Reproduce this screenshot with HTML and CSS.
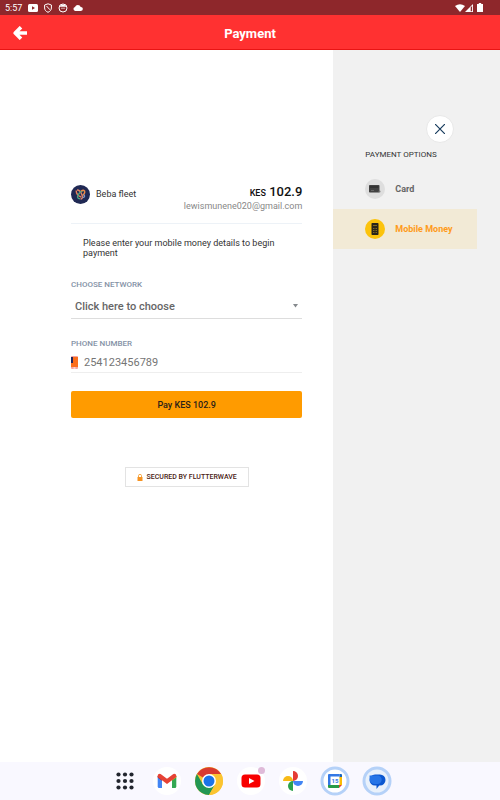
FILE: index.html
```
<!DOCTYPE html>
<html lang="en">
<head>
  <meta charset="UTF-8">
  <meta name="viewport" content="width=device-width, initial-scale=1.0">
  <title>Payment</title>
  <link rel="stylesheet" href="styles.css">
</head>
<body>
  <div class="status-bar">
    <span class="time">5:57</span>
    <svg width="10" height="8" viewBox="0 0 10 8"><rect width="10" height="8" rx="1.5" fill="#fff"/><path d="M4 2.2 7 4 4 5.8z" fill="#8e272b"/></svg>
    <svg width="10" height="10" viewBox="0 0 10 10" fill="none" stroke="#fff"><path d="M5 .8 8.4 2v3C8.4 7 7 8.5 5 9.3 3 8.5 1.6 7 1.6 5V2z"/><path d="M3.5 3 7 6.8"/></svg>
    <svg width="10" height="10" viewBox="0 0 10 10" fill="none" stroke="#fff"><circle cx="5" cy="5" r="4"/><path d="M2 3.2h6M3.2 2.3h3.6M4 4.7v1M6 4.7v1" stroke-width="1.2"/></svg>
    <svg width="10" height="8" viewBox="0 0 10 8"><path d="M2.2 7A2.1 2.1 0 0 1 2 2.9 3 3 0 0 1 7.7 3 2 2 0 0 1 8 7z" fill="#fff"/></svg>
    <div class="signals">
      <svg width="10" height="8" viewBox="0 0 10 8"><path d="M0 2Q5-1.6 10 2L5 8z" fill="#fff"/></svg>
      <svg width="8" height="8" viewBox="0 0 8 8"><path d="M0 8 8 0v8z" fill="#fff"/><path d="M5.7 3.2v4h1.4V2z" fill="#8e272b"/></svg>
      <svg class="battery" width="6" height="9" viewBox="0 0 6 9"><path d="M1.8 0h2.4v1H6v8H0V1h1.8z" fill="#fff"/></svg>
    </div>
  </div>

  <header class="app-bar">
    <button class="back" type="button" aria-label="Back">
      <svg width="14" height="14" viewBox="0 0 14 14" fill="none" stroke="#fff" stroke-width="3.600" stroke-linejoin="round"><path d="M8 1.200 2.200 7 8 12.800M3 7h11"/></svg>
    </button>
    <h1>Payment</h1>
  </header>

  <main class="checkout">
    <section class="details">
      <div class="summary">
        <svg class="logo" width="19" height="19" viewBox="0 0 19 19"><circle cx="9.500" cy="9.500" r="9.500" fill="#202954"/><g fill="none" stroke-width="1.400"><path d="M5.200 5.500c0 3 2 5.500 5 6.500" stroke="#e9805a"/><path d="M6 5c2 0 4 2 5 5s0 4-1.500 4" stroke="#d9826a"/><path d="M9 13.800c-2.500 0-3.200-2-1.500-4.500 1.500-2.300 4-4 5.500-3.500" stroke="#49a383"/><path d="M10.200 6.200c2-1.700 4-1 3.500 1.300-.3 1.500-1.200 2.300-2.200 3" stroke="#f18b45"/><path d="M12.500 9.500c1.600 1 1.400 3-.8 3" stroke="#8298c5"/></g></svg>
        <span class="merchant">Beba fleet</span>
        <div class="total">
          <div class="amount"><small>KES</small> 102.9</div>
          <div class="email">lewismunene020@gmail.com</div>
        </div>
      </div>

      <form class="payment-form">
        <p class="hint">Please enter your mobile money details to begin payment</p>

        <label class="field-label" for="network">CHOOSE NETWORK</label>
        <div class="select-box">
          <select id="network">
            <option>Click here to choose</option>
          </select>
          <svg width="5" height="4" viewBox="0 0 5 4"><path d="M0 0h5L2.500 3.500z" fill="#85898d"/></svg>
        </div>

        <label class="field-label" for="phone">PHONE NUMBER</label>
        <div class="phone-box">
          <svg width="7" height="13" viewBox="0 0 7 13"><rect width="7" height="13" rx="1" fill="#f4a5a0"/><path d="M0 1h7v10H0z" fill="#fb6d1c"/><path d="M0 1h2v6H0z" fill="#22265e"/><path d="M2.500 11.500h2v1h-2z" fill="#fff"/></svg>
          <input id="phone" type="tel" placeholder="254123456789">
        </div>

        <button class="pay" type="button">Pay KES 102.9</button>
      </form>

      <div class="secured">
        <svg width="6" height="7" viewBox="0 0 6 7"><path d="M1.500 3V1.800a1.500 1.500 0 0 1 3 0V3" fill="none" stroke="#f5a947"/><path d="M.5 3h5v4h-5z" fill="#f79321"/></svg>
        SECURED BY FLUTTERWAVE
      </div>
    </section>

    <aside class="options">
      <button class="close" type="button" aria-label="Close">
        <svg width="10" height="10" viewBox="0 0 10 10" stroke="#173c5e" stroke-width="1.200"><path d="M0 0l10 10M10 0 0 10"/></svg>
      </button>
      <h2>PAYMENT OPTIONS</h2>
      <button class="option" type="button">
        <span class="option-icon">
          <svg width="12" height="8" viewBox="0 0 12 8"><rect width="10.500" height="7.500" rx=".8" fill="#414141"/><path d="M1 2h8.500" stroke="#252525"/><path d="M2 5.500h3" stroke="#666"/><circle cx="10.500" cy="6.500" r="1" fill="#777"/></svg>
        </span>
        Card
      </button>
      <button class="option active" type="button">
        <span class="option-icon">
          <svg width="8" height="12" viewBox="0 0 8 12"><rect x=".5" width="7" height="12" rx=".7" fill="#29251b"/><path d="M2 2.500h4M2 5.500h1.500M4.500 5.500H6M2 7.500h1.500M4.500 7.500H6M2 9.500h1.500M4.500 9.500H6" stroke="#9a7b20" stroke-width=".8"/></svg>
        </span>
        Mobile Money
      </button>
    </aside>
  </main>

  <nav class="taskbar">
    <button type="button" aria-label="All apps">
      <svg width="28" height="28" viewBox="0 0 28 28" fill="#22252e"><circle cx="7.500" cy="7.500" r="2.100"/><circle cx="14" cy="7.500" r="2.100"/><circle cx="20.500" cy="7.500" r="2.100"/><circle cx="7.500" cy="14" r="2.100"/><circle cx="14" cy="14" r="2.100"/><circle cx="20.500" cy="14" r="2.100"/><circle cx="7.500" cy="20.500" r="2.100"/><circle cx="14" cy="20.500" r="2.100"/><circle cx="20.500" cy="20.500" r="2.100"/></svg>
    </button>
    <button type="button" aria-label="Gmail">
      <svg width="28" height="28" viewBox="0 0 28 28"><circle cx="14" cy="14" r="14" fill="#fff"/><path d="M4.700 9v10.500q0 1.500 1.500 1.500H9v-9z" fill="#4285f4"/><path d="M23.300 9v10.500q0 1.500-1.500 1.500H19v-9z" fill="#34a853"/><path d="M19 9v4.500l4.300-3.200V9z" fill="#fbbc04"/><path d="M4.700 9v1.500L9 13.700V9z" fill="#b92424"/><path d="M4.700 9c0-2 2-2.800 3.600-1.600L14 11.700l5.700-4.300c1.600-1.200 3.600-.4 3.600 1.600v1L14 17l-9.300-7z" fill="#e64235"/></svg>
    </button>
    <button type="button" aria-label="Chrome">
      <svg width="28" height="28" viewBox="0 0 28 28"><circle cx="14" cy="14" r="14" fill="#fbc431"/><path d="M14 14 2 7A14 14 0 0 1 26.100 7z" fill="#d83a30"/><path d="M1.900 7A14 14 0 0 0 14 28l6-10.500H8z" fill="#229754"/><path d="M14 7h12.100A14 14 0 0 1 14 28l6.100-10.500z" fill="#fbc431"/><circle cx="14" cy="14" r="7" fill="#fff"/><circle cx="14" cy="14" r="5.500" fill="#1a73e8"/></svg>
    </button>
    <button type="button" aria-label="YouTube">
      <svg width="28" height="28" viewBox="0 0 28 28"><circle cx="14" cy="14" r="14" fill="#fff"/><rect x="4.500" y="7.500" width="19" height="13" rx="3.500" fill="#f80000"/><path d="M12 11l5.500 3-5.500 3z" fill="#fff"/></svg>
      <span class="dot"></span>
    </button>
    <button type="button" aria-label="Photos">
      <svg width="28" height="28" viewBox="0 0 28 28"><circle cx="14" cy="14" r="14" fill="#fff"/><path d="M14 4a5 5 0 0 1 0 10z" fill="#e53b35"/><path d="M24 14a5 5 0 0 1-10 0z" fill="#4285f4"/><path d="M14 24a5 5 0 0 1 0-10z" fill="#2ba24c"/><path d="M4 14a5 5 0 0 1 10 0z" fill="#f8ba16"/></svg>
    </button>
    <button type="button" aria-label="Calendar">
      <svg width="28" height="28" viewBox="0 0 28 28"><circle cx="14" cy="14" r="13" fill="#fff" stroke="#b5d1f8" stroke-width="3"/><path d="M7.500 7.500h10.500v10.500H7.500z" fill="#fff"/><path d="M7 20V8q0-1 1-1h10.500v2.500h-9V18z" fill="#3478e5"/><path d="M18.500 7h1.500q1 0 1 1v2.500h-2.500z" fill="#1765c1"/><path d="M18.500 10h2.500V18h-2.500z" fill="#fbbc04"/><path d="M7 18h11v3H8q-1 0-1-1z" fill="#279b48"/><path d="M18 18h3l-3 3z" fill="#e13e33"/><text x="14" y="16" text-anchor="middle" class="date">15</text></svg>
    </button>
    <button type="button" aria-label="Messages">
      <svg width="28" height="28" viewBox="0 0 28 28"><circle cx="14" cy="14" r="13" fill="#e9f1fb" stroke="#b5d1f8" stroke-width="3"/><path d="M12 7.500h5a5.500 5.500 0 0 1 0 11h-.8L13.500 22v-3.500H12a5.500 5.500 0 0 1 0-11z" fill="#0b57d0"/><path d="M6.500 8.500h8a4.200 4.200 0 0 1 0 8.400H11a4.500 4.500 0 0 1-4.300-5z" fill="#2675e7"/></svg>
    </button>
  </nav>
</body>
</html>
```
FILE: styles.css
```
* {
  box-sizing: border-box;
}
body {
  margin: 0;
  min-height: 100vh;
  display: flex;
  flex-direction: column;
  font-family: Roboto, Arial, sans-serif;
  font-size: 9px;
  color: #333;
  background-color: #fff;
}
button, input, select {
  font-family: inherit;
  border: none;
  padding: 0;
  background: none;
}
button {
  cursor: pointer;
}
svg {
  display: block;
  flex-shrink: 0;
}

/* top bars */
.status-bar {
  display: flex;
  align-items: center;
  gap: 5px;
  height: 15px;
  padding: 0 17px 0 5px;
  color: #fff;
  background-color: #8e272b;
}
.time {
  margin-right: 1px;
}
.signals {
  display: flex;
  align-items: center;
  margin-left: auto;
}
.battery {
  margin-left: 4px;
}
.app-bar {
  display: grid;
  grid-template-columns: 1fr auto 1fr;
  align-items: center;
  height: 35px;
  padding: 2px 13px 0;
  color: #fff;
  background-color: #ff3131;
  border-bottom: 1px solid #e81414;
}
.back {
  justify-self: start;
}
.app-bar h1 {
  margin: 0;
  font-size: 13px;
  font-weight: 700;
}

/* checkout */
.checkout {
  flex: 1;
  display: grid;
  grid-template-columns: 2fr 1fr;
}
.details {
  padding: 134px 31px 0 71px;
}
.summary {
  display: flex;
  align-items: flex-start;
  height: 40px;
  border-bottom: 1px solid #edf2f7;
}
.logo {
  margin-top: 1px;
}
.merchant {
  margin: 5px 0 0 6px;
}
.total {
  margin-left: auto;
  text-align: right;
}
.amount {
  font-size: 13px;
  line-height: 16px;
  font-weight: 500;
  color: #111;
}
.amount small {
  font-size: 9px;
}
.email {
  line-height: 10px;
  color: #888;
}
.payment-form {
  display: flex;
  flex-direction: column;
}
.hint {
  margin: 14px 12px 22px;
  line-height: 10px;
}
.field-label {
  font-size: 8px;
  line-height: 10px;
  font-weight: 500;
  color: #8492a6;
}
.select-box {
  display: flex;
  align-items: center;
  height: 29px;
  margin-bottom: 20px;
  padding: 4px 4px 0;
  border-bottom: 1px solid #ddd;
}
.select-box select {
  flex: 1;
  appearance: none;
  font-size: 11px;
  font-weight: 500;
  color: #666;
}
.phone-box {
  display: flex;
  align-items: center;
  gap: 6px;
  height: 24px;
  margin-bottom: 18px;
  padding-top: 4px;
  border-bottom: 1px solid #eee;
}
.phone-box input {
  flex: 1;
  min-width: 0;
  font-size: 11px;
}
.phone-box input::placeholder {
  color: #757575;
}
.pay {
  height: 27px;
  font-size: 9px;
  font-weight: 500;
  color: #2b2118;
  background-color: #ff9b00;
  border-radius: 2px;
}
.secured {
  display: flex;
  align-items: center;
  gap: 4px;
  width: fit-content;
  height: 20px;
  margin: 49px auto 0;
  padding: 0 11px;
  font-size: 7px;
  font-weight: 500;
  color: #4a1b14;
  border: 1px solid #e3e3e3;
}

/* payment options */
.options {
  display: flex;
  flex-direction: column;
  align-items: flex-start;
  padding-top: 65px;
  background-color: #f1f1f1;
}
.close {
  display: grid;
  place-items: center;
  width: 28px;
  height: 28px;
  margin-left: 93px;
  background-color: #fff;
  border: 1px solid #e8e8e8;
  border-radius: 50%;
}
.options h2 {
  margin: 7px 0 9px 32px;
  font-size: 8px;
  line-height: 10px;
  font-weight: 400;
}
.option {
  display: flex;
  align-items: center;
  gap: 10px;
  width: 86%;
  height: 40px;
  padding-left: 32px;
  font-size: 9px;
  font-weight: 700;
  color: #666;
}
.option.active {
  color: #ff9b1a;
  background-color: #f2ead6;
}
.option-icon {
  display: grid;
  place-items: center;
  width: 20px;
  height: 20px;
  background-color: #dedede;
  border-radius: 50%;
}
.active .option-icon {
  background-color: #fcc30b;
}

/* taskbar */
.taskbar {
  display: flex;
  align-items: center;
  justify-content: center;
  gap: 14px;
  height: 38px;
  padding-left: 2px;
  background-color: #f9f8ff;
}
.taskbar button {
  position: relative;
}
.taskbar svg {
  overflow: visible;
}
.date {
  font-size: 6px;
  font-weight: 700;
  fill: #3478e5;
}
.dot {
  position: absolute;
  top: 0;
  right: 0;
  width: 7px;
  height: 7px;
  background-color: #dfbad9;
  border-radius: 50%;
}
```
